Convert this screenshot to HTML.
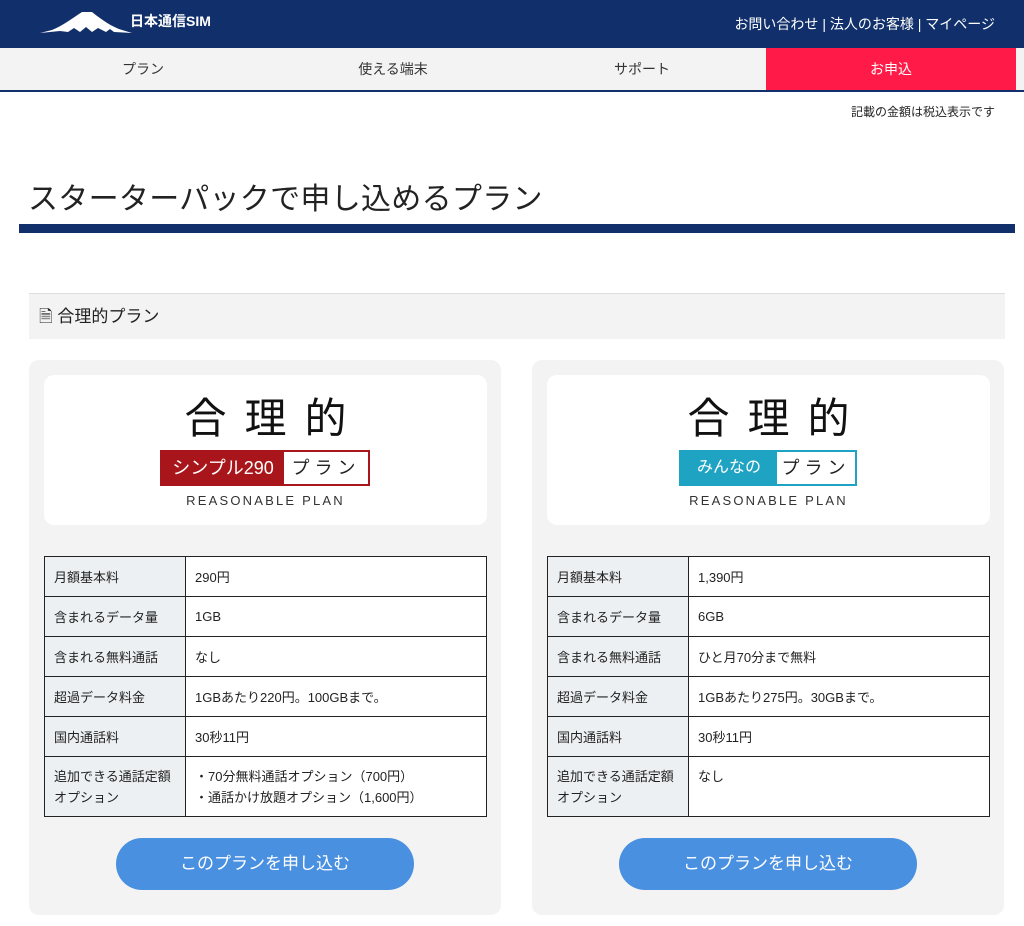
<!DOCTYPE html><html><head><meta charset="utf-8"><style>
*{margin:0;padding:0;box-sizing:border-box}
body{width:1024px;height:926px;background:#fff;font-family:"Liberation Sans","Noto Sans CJK JP",sans-serif;color:#222;position:relative;overflow:hidden}
.hd{position:absolute;left:0;top:0;width:1024px;height:48px;background:#11306b;color:#fff}
.nav{position:absolute;top:48px;left:0;width:1024px;height:44px;background:#f3f3f3;border-bottom:2px solid #11306b}
.nav div{position:absolute;top:0;height:42px;line-height:42px;text-align:center;font-size:14px;color:#333}
.card{position:absolute;top:360px;width:472px;height:555px;background:#f3f3f3;border-radius:10px}
.logo{position:absolute;left:15px;top:15px;width:443px;height:150px;background:#fff;border-radius:10px;text-align:center}
.big{position:absolute;top:16px;left:0;width:100%;font-size:42px;letter-spacing:18px;text-indent:18px;font-weight:400;color:#111;line-height:56px}
.bar{position:absolute;top:75px;height:36px;border:2px solid;display:flex;font-size:18px;line-height:32px;white-space:nowrap;overflow:hidden}
.bar span{display:block}
.rp{position:absolute;top:118px;width:100%;font-size:13px;letter-spacing:2.2px;color:#333}
table{position:absolute;left:15px;top:196px;width:443px;border-collapse:collapse;background:#fff;font-size:13px}
td{border:1px solid #222;height:40px;padding:0 9px;vertical-align:middle}
td:first-child{width:141px;background:#edf0f3}
.btn{position:absolute;left:87px;top:478px;width:298px;height:52px;border-radius:26px;background:#4a90e0;color:#fff;font-size:17px;text-align:center;line-height:52px}
</style></head><body>
<div class="hd">
<svg style="position:absolute;left:40px;top:10px" width="92" height="24" viewBox="0 0 92 24"><path d="M0 23 L12 20 C22 16 30 10 42 2 L52 2 C62 10 72 17 82 20 L92 23 L74 22 L70 19 L66 22 L58 18 L52 22 L46 17 L40 22 L34 18 L28 22 L20 21 Z" fill="#fff"/></svg>
<div style="position:absolute;left:130px;top:11px;font-size:14px;font-weight:bold">日本通信SIM</div>
<div style="position:absolute;right:29px;top:14px;font-size:14px">お問い合わせ | 法人のお客様 | マイページ</div>
</div>
<div class="nav">
<div style="left:18px;width:250px">プラン</div>
<div style="left:268px;width:250px">使える端末</div>
<div style="left:518px;width:248px">サポート</div>
<div style="left:766px;width:250px;background:#ff1a47;color:#fff">お申込</div>
</div>
<div style="position:absolute;right:29px;top:103px;font-size:12px">記載の金額は税込表示です</div>
<div style="position:absolute;left:28px;top:174px;font-size:30px;color:#222;letter-spacing:0.3px">スターターパックで申し込めるプラン</div>
<div style="position:absolute;left:19px;top:224px;width:996px;height:9px;background:#11306b"></div>
<div style="position:absolute;left:29px;top:293px;width:976px;height:46px;background:#f3f3f3;border-top:1px solid #ddd;font-size:17px;line-height:45px;padding-left:10px">🗎 合理的プラン</div>

<div class="card" style="left:29px">
<div class="logo"><div class="big">合理的</div>
<div class="bar" style="left:116px;width:210px;border-color:#a8161b"><span style="background:#a8161b;color:#fff;width:122px">シンプル290</span><span style="flex:1;letter-spacing:5px">プラン</span></div>
<div class="rp">REASONABLE PLAN</div></div>
<table>
<tr><td>月額基本料</td><td>290円</td></tr>
<tr><td>含まれるデータ量</td><td>1GB</td></tr>
<tr><td>含まれる無料通話</td><td>なし</td></tr>
<tr><td>超過データ料金</td><td>1GBあたり220円。100GBまで。</td></tr>
<tr><td>国内通話料</td><td>30秒11円</td></tr>
<tr><td style="height:60px;line-height:21px">追加できる通話定額オプション</td><td style="line-height:21px">・70分無料通話オプション（700円）<br>・通話かけ放題オプション（1,600円）</td></tr>
</table>
<div class="btn">このプランを申し込む</div>
</div>

<div class="card" style="left:532px">
<div class="logo"><div class="big">合理的</div>
<div class="bar" style="left:132px;width:178px;border-color:#1fa3c2"><span style="background:#1fa3c2;color:#fff;width:96px;font-size:16px">みんなの</span><span style="flex:1;letter-spacing:5px">プラン</span></div>
<div class="rp">REASONABLE PLAN</div></div>
<table>
<tr><td>月額基本料</td><td>1,390円</td></tr>
<tr><td>含まれるデータ量</td><td>6GB</td></tr>
<tr><td>含まれる無料通話</td><td>ひと月70分まで無料</td></tr>
<tr><td>超過データ料金</td><td>1GBあたり275円。30GBまで。</td></tr>
<tr><td>国内通話料</td><td>30秒11円</td></tr>
<tr><td style="height:60px;line-height:21px">追加できる通話定額オプション</td><td style="vertical-align:top;padding-top:9px">なし</td></tr>
</table>
<div class="btn">このプランを申し込む</div>
</div>
</body></html>
